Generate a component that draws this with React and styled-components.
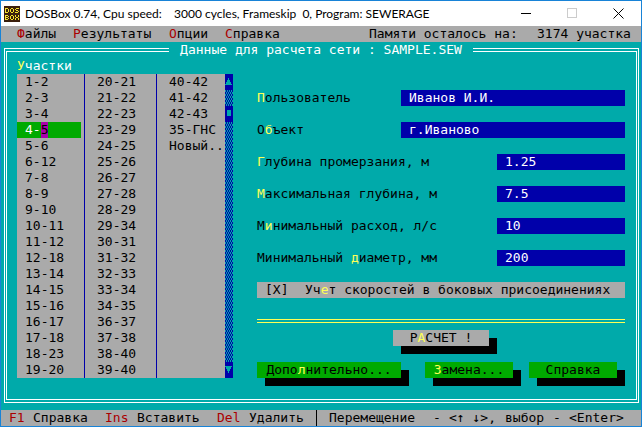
import React, { useState } from 'react'
import styled, { createGlobalStyle } from 'styled-components'

const columns = [
  [
    '1-2', '2-3', '3-4', '4-5', '5-6', '6-12', '7-8', '8-9', '9-10', '10-11',
    '11-12', '12-18', '13-14', '14-15', '15-16', '16-17', '17-18', '18-23', '19-20',
  ],
  [
    '20-21', '21-22', '22-23', '23-29', '24-25', '25-26', '26-27', '27-28', '28-29', '29-34',
    '30-31', '31-32', '32-33', '33-34', '34-35', '36-37', '37-38', '38-40', '39-40',
  ],
  ['40-42', '41-42', '42-43', '35-ГНС', 'Новый..'],
]

const menu = ['Файлы', 'Результаты', 'Опции', 'Справка']

// hot is the index of the highlighted shortcut letter
const fields = [
  { id: 'user', label: 'Пользователь', hot: 0, value: 'Иванов И.И.', wide: true },
  { id: 'object', label: 'Объект', hot: 1, value: 'г.Иваново', wide: true },
  { id: 'frost', label: 'Глубина промерзания, м', hot: 0, value: '1.25' },
  { id: 'depth', label: 'Максимальная глубина, м', hot: 0, value: '7.5' },
  { id: 'flow', label: 'Минимальный расход, л/с', hot: 1, value: '10' },
  { id: 'diameter', label: 'Минимальный диаметр, мм', hot: 12, value: '200' },
]

const keys = [
  { key: 'F1', text: 'Справка' },
  { key: 'Ins', text: 'Вставить' },
  { key: 'Del', text: 'Удалить' },
]

const Hotkey = ({ text, hot = 0, color = '#ffff55' }) => (
  <>
    {text.slice(0, hot)}
    <HotLetter $color={color}>{text[hot]}</HotLetter>
    {text.slice(hot + 1)}
  </>
)

const App = () => {
  const [values, setValues] = useState(
    Object.fromEntries(fields.map(field => [field.id, field.value]))
  )
  const [selected, setSelected] = useState('4-5')
  const [sideFlow, setSideFlow] = useState(true)

  const handleChange = event => {
    setValues({ ...values, [event.target.id]: event.target.value })
  }

  return (
    <Window>
      <GlobalStyle />
      <TitleBar>
        <Logo viewBox="0 0 16 16" shapeRendering="crispEdges">
          <rect width="16" height="16" fill="#3a1f0c" />
          <g fill="none" stroke="#f4e22c" strokeWidth="1">
            <path d="M1.5 2v5M2 2.5h2M2 6.5h2M4.5 3v3" />
            <path d="M6.5 3v3M7 2.5h2M7 6.5h2M9.5 3v3" />
            <path d="M12 2.5h3M11.5 3v1M12 4.5h2M14.5 5v1M11 6.5h3" />
            <path d="M1.5 9v5M2 9.5h2M2 11.5h2M2 13.5h2M4.5 10v1M4.5 12v1" />
            <path d="M6.5 10v3M7 9.5h2M7 13.5h2M9.5 10v3" />
            <path d="M11.5 9v2M14.5 9v2M12 11.5h2M11.5 12v2M14.5 12v2" />
          </g>
        </Logo>
        <Title>{'DOSBox 0.74, Cpu speed:    3000 cycles, Frameskip  0, Program: SEWERAGE'}</Title>
        <WindowButton aria-label="Свернуть">
          <svg width="11" height="11" shapeRendering="crispEdges">
            <path d="M0 5.5h10" stroke="#000" />
          </svg>
        </WindowButton>
        <WindowButton aria-label="Развернуть" disabled>
          <svg width="11" height="11" shapeRendering="crispEdges">
            <path d="M.5 .5h9v9h-9z" fill="none" stroke="#ccc" />
          </svg>
        </WindowButton>
        <WindowButton aria-label="Закрыть">
          <svg width="11" height="11">
            <path d="M.5 .5l10 10M10.5 .5l-10 10" stroke="#000" />
          </svg>
        </WindowButton>
      </TitleBar>

      <MenuBar>
        {menu.map(item => (
          <MenuButton key={item} $cells={item.length}>
            <Hotkey text={item} color="#aa0000" />
          </MenuButton>
        ))}
        <Memory>
          <Cells $cells={21}>Памяти осталось на:</Cells>
          <Cells $cells={12}>3174 участка</Cells>
        </Memory>
      </MenuBar>

      <Desktop>
        <Dialog>
          <DialogTitle>Данные для расчета сети : SAMPLE.SEW</DialogTitle>
          <DialogBody>
            <Sections>
              <ListTitle id="sections">
                <Hotkey text="Участки" />
              </ListTitle>
              <ListBox role="listbox" aria-labelledby="sections">
                {columns.map(items => (
                  <Column key={items[0]}>
                    {items.map(item => (
                      <Item
                        key={item}
                        role="option"
                        aria-selected={item === selected}
                        $selected={item === selected}
                        onClick={() => setSelected(item)}
                      >
                        {item === selected ? (
                          <>
                            {item.slice(0, 2)}
                            <Cursor>{item[2]}</Cursor>
                            {item.slice(3)}
                          </>
                        ) : (
                          item
                        )}
                      </Item>
                    ))}
                  </Column>
                ))}
                <ScrollBar>
                  <ScrollCell viewBox="0 0 8 16">
                    <path d="M3 4h1v2h1v2h1v2h1v1h-7v-1h1v-2h1v-2h1z" />
                  </ScrollCell>
                  <Track $rows={1} />
                  <ScrollCell viewBox="0 0 8 16">
                    <path d="M2 4h4v6h-4z" />
                  </ScrollCell>
                  <Track />
                  <ScrollCell viewBox="0 0 8 16">
                    <path d="M0 4h7v1h-1v2h-1v2h-1v2h-1v-2h-1v-2h-1v-2h-1z" />
                  </ScrollCell>
                </ScrollBar>
              </ListBox>
            </Sections>

            <Form onSubmit={event => event.preventDefault()}>
              {fields.map(({ id, label, hot, wide }) => (
                <Field key={id}>
                  <label htmlFor={id}>
                    <Hotkey text={label} hot={hot} />
                  </label>
                  <Input id={id} $wide={wide} value={values[id]} onChange={handleChange} />
                </Field>
              ))}
              <CheckLabel>
                <CheckInput
                  type="checkbox"
                  checked={sideFlow}
                  onChange={() => setSideFlow(!sideFlow)}
                />
                <Cells $cells={5}>{sideFlow ? '[X]' : '[ ]'}</Cells>
                <span>
                  <Hotkey text="Учет скоростей в боковых присоединениях" hot={2} />
                </span>
              </CheckLabel>
              <Rule />
              <RunButton type="submit" $cells={12}>
                <Hotkey text="РАСЧЕТ !" hot={1} />
              </RunButton>
              <Actions>
                <ActionButton type="button" $cells={18}>
                  <Hotkey text="Дополнительно..." hot={4} />
                </ActionButton>
                <ActionGroup>
                  <ActionButton type="button" $cells={11}>
                    <Hotkey text="Замена..." />
                  </ActionButton>
                  <ActionButton type="button" $cells={11}>
                    Справка
                  </ActionButton>
                </ActionGroup>
              </Actions>
            </Form>
          </DialogBody>
        </Dialog>
      </Desktop>

      <StatusBar>
        {keys.map(({ key, text }) => (
          <KeyHint key={key}>
            <Key $cells={key.length}>{key}</Key>
            <Cells $cells={text.length}>{text}</Cells>
          </KeyHint>
        ))}
        <Hint>
          <Cells $cells={13}>Перемещение</Cells>
          <Cells $cells={2}>-</Cells>
          <Cells $cells={7}>{'<↑ ↓>,'}</Cells>
          <Cells $cells={6}>выбор</Cells>
          <Cells $cells={2}>-</Cells>
          <Cells $cells={7}>{'<Enter>'}</Cells>
        </Hint>
      </StatusBar>
    </Window>
  )
}

export default App

const GlobalStyle = createGlobalStyle`
  body {
    margin: 0;
  }

  * {
    box-sizing: border-box;
  }

  button,
  input {
    font: inherit;
    color: inherit;
    border: none;
    border-radius: 0;
    outline: none;
    margin: 0;
    padding: 0;
  }
`

const Window = styled.div`
  border: 1px solid #1883d7;
  color: #000;
  font-family: 'DejaVu Sans Mono', monospace;
  font-size: 13px;
  line-height: 16px;
  white-space: nowrap;
`

const TitleBar = styled.header`
  display: flex;
  align-items: center;
  height: 25px;
  padding-left: 3px;
  background: #fff;
`

const Logo = styled.svg`
  width: 16px;
  height: 16px;
  margin-right: 5px;
`

const Title = styled.h1`
  flex: 1;
  margin: 0;
  font-family: Lato, 'Open Sans', sans-serif;
  font-size: 12px;
  font-weight: 400;
  white-space: pre;
`

const WindowButton = styled.button`
  display: flex;
  align-items: center;
  justify-content: center;
  width: 46px;
  height: 25px;
  background: none;
`

const MenuBar = styled.nav`
  display: flex;
  gap: 16px;
  padding: 0 8px 0 16px;
  background: #aaa;
`

/* text mode cell is 8px wide */
const Cells = styled.span`
  display: inline-block;
  flex: none;
  width: ${props => props.$cells * 8}px;
`

const MenuButton = styled.button`
  width: ${props => props.$cells * 8}px;
  background: none;
  text-align: left;
`

const Memory = styled.div`
  margin-left: auto;
`

const HotLetter = styled.span`
  color: ${props => props.$color};
`

const Desktop = styled.main`
  padding: 0 2px 7px 3px;
  background: #00aaaa;
`

const Dialog = styled.fieldset`
  min-width: 0;
  margin: 0;
  padding: 0 11px 21px 10px;
  border: double #fff;
  border-width: 4px 3px;
`

const DialogTitle = styled.legend`
  width: 304px;
  margin: 0 auto;
  padding: 0;
  color: #fff;
  text-align: center;
`

const DialogBody = styled.div`
  display: flex;
  gap: 24px;
`

const Sections = styled.section`
  flex: none;
  width: 216px;
`

const ListTitle = styled.div`
  color: #fff;
`

const ListBox = styled.div`
  display: grid;
  grid-template-columns: 68px 72px 68px 8px;
  background: #aaa;
`

const Column = styled.div`
  border-right: 1px solid #0000aa;

  & + & {
    padding-left: 4px;
  }

  &:nth-child(3) {
    border-right: none;
  }
`

const Item = styled.div`
  width: 64px;
  padding-left: 8px;
  color: ${props => (props.$selected ? '#fff' : '#000')};
  background: ${props => (props.$selected ? '#00aa00' : 'none')};
  cursor: default;
`

const Cursor = styled.span`
  display: inline-block;
  color: #000;
  background: #aa00aa;
`

const ScrollBar = styled.div`
  display: flex;
  flex-direction: column;
`

const ScrollCell = styled.svg`
  flex: none;
  width: 8px;
  height: 16px;
  background: #0000aa;
  fill: #00aaaa;
  shape-rendering: crispEdges;
`

const Track = styled.div`
  flex: ${props => (props.$rows ? `0 0 ${props.$rows * 16}px` : 1)};
  background: repeating-conic-gradient(#0000aa 0 25%, #00aaaa 0 50%) 0 0 / 2px 4px;
`

const Form = styled.form`
  display: flex;
  flex: 1;
  flex-direction: column;
  gap: 16px;
  padding-top: 32px;
`

const Field = styled.div`
  display: flex;
  justify-content: space-between;
`

const Input = styled.input`
  width: ${props => (props.$wide ? 224 : 128)}px;
  height: 16px;
  padding: 0 8px;
  color: #fff;
  background: #0000aa;
`

const CheckLabel = styled.label`
  padding: 0 8px;
  background: #aaa;
`

const CheckInput = styled.input`
  position: absolute;
  opacity: 0;
`

const Rule = styled.hr`
  width: 100%;
  height: 4px;
  margin: 5px 0 -9px;
  border: none;
  border-top: 4px double #ffff55;
`

const RunButton = styled.button`
  align-self: center;
  width: ${props => props.$cells * 8}px;
  height: 16px;
  background: #aaa;
  box-shadow: 8px 8px #000;
`

const ActionButton = styled(RunButton)`
  background: #00aa00;
`

const Actions = styled.div`
  display: flex;
  justify-content: space-between;
  padding-right: 8px;
`

const ActionGroup = styled.div`
  display: flex;
  gap: 16px;
`

const StatusBar = styled.footer`
  display: flex;
  gap: 16px;
  padding-left: 8px;
  background: #aaa;
`

const KeyHint = styled.div`
  display: flex;
  gap: 8px;
`

const Key = styled.kbd`
  width: ${props => props.$cells * 8}px;
  color: #aa0000;
  font: inherit;
`

const Hint = styled.div`
  display: flex;
  margin-left: -5px;
  padding-left: 12px;
  border-left: 1px solid #000;
`
